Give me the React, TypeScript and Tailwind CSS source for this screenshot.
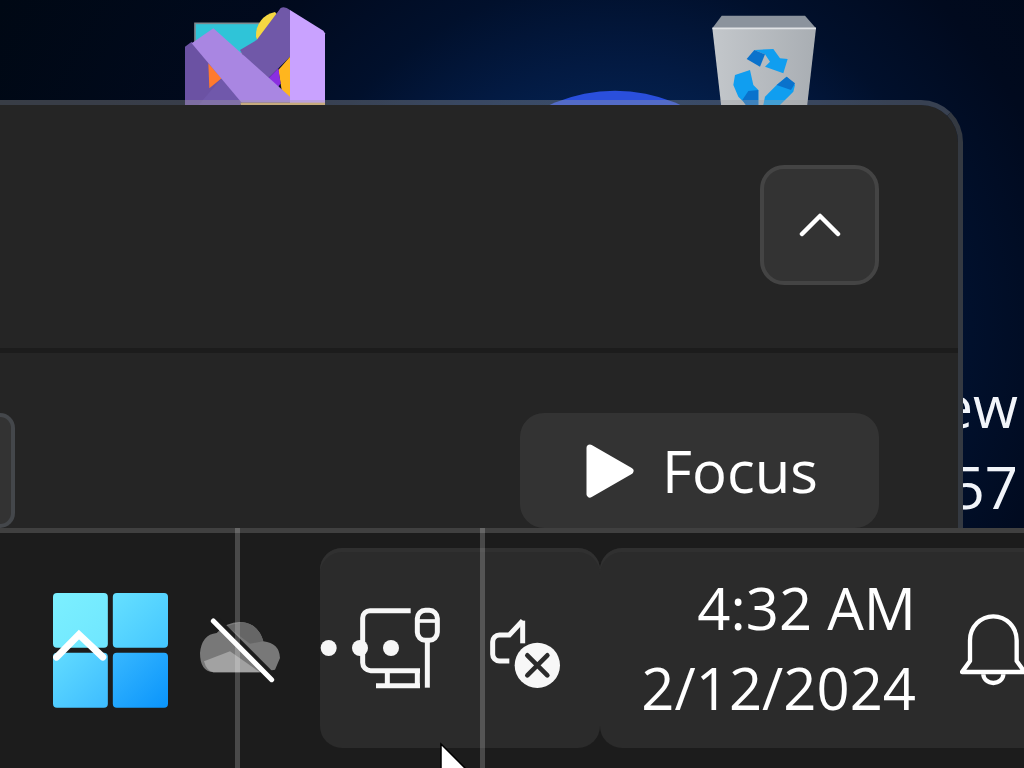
import React from "react";

const font = "font-['Open_Sans',sans-serif]";

// things sitting on the desktop, mostly hidden by the flyout
function VisualStudioIcon() {
  return (
    <svg className="absolute left-[150px] top-0 w-[340px] h-[130px]" viewBox="0 0 1020 390">
      <rect x="135" y="70" width="200" height="90" fill="#2fc4d8" stroke="#7d8a90" strokeWidth="5" />
      <path d="M318 110 A70 70 0 0 1 375 36 L395 60 L330 140 Z" fill="#f5d742" />
      <path d="M105 140 L125 125 L275 305 L270 316 L105 316 Z" fill="#6b52a3" />
      <path d="M175 190 L215 235 L178 265 Z" fill="#ff7a2e" />
      <path d="M145 316 L215 235 L275 305 L270 316 Z" fill="#7058ab" />
      <path d="M270 150 L320 120 L392 24 Q405 18 420 30 L420 170 L355 235 L300 200 Z" fill="#7058a8" />
      <path d="M385 210 L420 170 L420 295 L395 270 Z" fill="#ffb61e" />
      <path d="M355 235 L385 205 L392 250 L382 265 Z" fill="#8a2fe0" />
      <path d="M125 130 L190 85 L420 290 L420 308 L275 308 Z" fill="#a986e2" />
      <path d="M420 30 L520 92 L525 100 L525 316 L420 316 Z" fill="#c9a2ff" />
      <rect x="272" y="308" width="253" height="8" fill="#dcb169" />
    </svg>
  );
}

function DesktopIcons() {
  return (
    <svg className="absolute left-[500px] top-0 w-[524px] h-[300px]" viewBox="0 0 1572 900">
      <defs>
        <linearGradient id="bin" x1="0" y1="0" x2="1" y2="0">
          <stop offset="0" stopColor="#c3c7cb" />
          <stop offset="1" stopColor="#a9aeb3" />
        </linearGradient>
      </defs>
      <circle cx="345" cy="743" r="471" fill="#2a4fdc" />
      <path d="M665 47 H915 L948 85 H637 Z" fill="#8b939d" />
      <path d="M637 85 H948 L920 330 H665 Z" fill="url(#bin)" />
      <path d="M637 85 H948" stroke="#dfe2e5" strokeWidth="5" />
      <g transform="translate(645 105)">
        <path d="M118 45 L175 42 L195 70 L218 72 L205 115 L150 95 L165 80 L150 58 Z" fill="#109ef0" />
        <path d="M95 72 L118 45 L150 58 L135 95 Z" fill="#0a72cc" />
        <path d="M60 120 L105 105 L115 150 L130 165 L130 210 L95 210 L70 185 L55 150 Z" fill="#109ef0" />
        <path d="M100 168 L130 165 L130 210 L92 210 L82 195 Z" fill="#0a72cc" />
        <path d="M185 150 L215 125 L240 150 L235 170 L195 210 L145 210 L150 185 Z" fill="#109ef0" />
        <path d="M185 150 L215 125 L240 145 L228 165 Z" fill="#0a72cc" />
      </g>
    </svg>
  );
}

function StartLogo() {
  return (
    <svg className="w-[115px] h-[115px] shrink-0" viewBox="160 220 346 346">
      <defs>
        <linearGradient id="w1" x1="0" y1="0" x2="1" y2="1">
          <stop offset="0" stopColor="#7cf0ff" />
          <stop offset="1" stopColor="#6fe6ff" />
        </linearGradient>
        <linearGradient id="w2" x1="0" y1="0" x2="1" y2="1">
          <stop offset="0" stopColor="#66e0ff" />
          <stop offset="1" stopColor="#44c6ff" />
        </linearGradient>
        <linearGradient id="w3" x1="0" y1="0" x2="1" y2="1">
          <stop offset="0" stopColor="#62dcff" />
          <stop offset="1" stopColor="#3dbcff" />
        </linearGradient>
        <linearGradient id="w4" x1="0" y1="0" x2="1" y2="1">
          <stop offset="0" stopColor="#38b8ff" />
          <stop offset="1" stopColor="#0a94fb" />
        </linearGradient>
      </defs>
      <rect x="160" y="220" width="165" height="165" rx="12" fill="url(#w1)" />
      <rect x="340" y="220" width="166" height="165" rx="12" fill="url(#w2)" />
      <rect x="160" y="400" width="165" height="165" rx="12" fill="url(#w3)" />
      <rect x="340" y="400" width="166" height="165" rx="12" fill="url(#w4)" />
      <path d="M171 413 L238 345 L310 413" fill="none" stroke="#fff" strokeWidth="21" strokeLinecap="round" strokeLinejoin="miter" />
    </svg>
  );
}

function OneDriveOff() {
  return (
    <svg className="w-[80px] h-[64px] shrink-0 overflow-visible" viewBox="600 295 240 192">
      <path d="M640 458 Q600 455 600 400 Q605 345 650 340 Q680 305 725 307 Q775 312 790 365 Q838 370 840 415 L825 450 L780 458 Z" fill="#787878" />
      <path d="M612 425 L690 395 L780 458 H640 Q620 455 612 425 Z" fill="#a2a2a2" />
      <path d="M680 320 L725 307 Q775 312 790 365 L750 372 Z" fill="#666" />
      <path d="M650 300 L825 475" stroke="#1c1c1c" strokeWidth="18" />
      <path d="M640 304 L815 480" stroke="#fff" strokeWidth="15" strokeLinecap="round" />
    </svg>
  );
}

function TrayIcons() {
  return (
    <svg className="w-[280px] h-[200px]" viewBox="60 84 840 600">
      <g fill="none" stroke="#f7f7f7" strokeWidth="15" strokeLinecap="butt">
        <path d="M332 272 H210 A22 22 0 0 0 188 294 V428 A24 24 0 0 0 212 452 H360" />
        <path d="M262 452 V495 M352 452 V495 M228 497 H360" />
        <rect x="352" y="271" width="60" height="90" rx="24" />
        <path d="M352 303 H412" strokeWidth="11" />
        <path d="M382 361 V503" />
        <path d="M668 302 L628 345 H598 A20 20 0 0 0 578 365 V403 A20 20 0 0 0 598 423 H628" />
        <path d="M668 302 V370" />
      </g>
      <circle cx="86" cy="384" r="24" fill="#f7f7f7" />
      <circle cx="180" cy="384" r="24" fill="#f7f7f7" />
      <circle cx="273" cy="384" r="24" fill="#f7f7f7" />
      <circle cx="712" cy="436" r="68" fill="#f7f7f7" />
      <path d="M682 406 L742 466 M742 406 L682 466" stroke="#2b2b2b" strokeWidth="14" strokeLinecap="round" />
    </svg>
  );
}

export default function App() {
  return (
    <div className={`relative w-[1024px] h-[768px] overflow-hidden bg-[#1c1c1c] ${font}`}>
      <div className="relative flex h-[528px] bg-[radial-gradient(circle_at_620px_330px,#0a3570_0%,#052a60_20%,#031a42_38%,#01102c_50%,#010a1e_65%,#000814_100%)]">
        <VisualStudioIcon />
        <DesktopIcons />

        {/* flyout */}
        <div className="relative mt-[100px] w-[963px] h-[428px] shrink-0 flex flex-col rounded-tr-[42px] border-t-[5px] border-r-[5px] border-t-[#a0a0a0]/35 border-r-[#343941] bg-[#252525] bg-clip-padding">
          <div className="flex justify-end h-[243px] pt-[60px] pr-[79px]">
            <button className="flex items-center justify-center w-[119px] h-[120px] rounded-[24px] border-[4px] border-[#444444] bg-[#333333]">
              <svg className="w-[42px] h-[24px]" viewBox="0 0 42 24">
                <path d="M3 21 L21 3 L39 21" fill="none" stroke="#fff" strokeWidth="4.5" strokeLinecap="round" strokeLinejoin="round" />
              </svg>
            </button>
          </div>
          <div className="h-[5px] bg-[#1c1c1c]" />
          <div className="flex flex-1 justify-between pt-[60px] pr-[79px]">
            <div className="w-[15px] h-[115px] rounded-r-[22px] border-y-[4px] border-r-[4px] border-[#44474b] bg-[#333333]" />
            <button className="flex items-center justify-center gap-[27px] w-[359px] h-[115px] pl-[4px] rounded-[24px] bg-[#333333] text-white text-[58px]">
              <svg className="w-[50px] h-[56px]" viewBox="0 0 50 56">
                <path d="M5 5 L45 28 L5 51 Z" fill="#fff" stroke="#fff" strokeWidth="7" strokeLinejoin="round" />
              </svg>
              <span className="leading-none">Focus</span>
            </button>
          </div>
        </div>

        {/* desktop labels cut off by the flyout */}
        <div className="flex flex-col items-end w-[61px] overflow-hidden pt-[365px] pr-[6px] text-[58px] leading-[81px] text-[#f2f5fa] whitespace-nowrap">
          <span>ew</span>
          <span>57</span>
        </div>
      </div>

      {/* taskbar */}
      <div className="flex items-start h-[240px] border-t-[5px] border-[#404040] bg-[#1c1c1c] pt-[15px]">
        <div className="flex items-center h-[200px] pt-[4px] ml-[53px] gap-[32px] shrink-0">
          <StartLogo />
          <OneDriveOff />
        </div>
        <div className="ml-[40px] w-[280px] h-[200px] shrink-0 rounded-[22px] bg-[#2b2b2b] shadow-[inset_0_4px_0_#303030]">
          <TrayIcons />
        </div>
        <div className="flex items-center w-[460px] h-[200px] shrink-0 rounded-[22px] bg-[#2b2b2b] shadow-[inset_0_4px_0_#303030] text-white text-[58px] leading-[80px]">
          <div className="w-[316px] text-right whitespace-nowrap">
            <p>4:32 AM</p>
            <p>2/12/2024</p>
          </div>
          <svg className="ml-[44px] w-[70px] h-[75px] shrink-0" viewBox="1080 270 210 225">
            <path
              d="M1110 420 V358 A70 72 0 0 1 1250 358 V420 L1274 453 H1086 Z"
              fill="none"
              stroke="#fff"
              strokeWidth="13"
              strokeLinejoin="round"
            />
            <path d="M1150 460 A30 26 0 0 0 1210 460" fill="none" stroke="#fff" strokeWidth="13" />
          </svg>
        </div>
      </div>

      {/* capture artefacts lying over the taskbar */}
      <div className="absolute left-[235px] top-[528px] w-[5px] h-[240px] bg-white/20" />
      <div className="absolute left-[480px] top-[528px] w-[5px] h-[240px] bg-white/20" />
      <svg className="absolute left-[436px] top-[740px] w-[40px] h-[28px]" viewBox="0 0 40 28">
        <path d="M5 4 L34 33 H5 Z" fill="#fff" stroke="#000" strokeWidth="1.5" />
      </svg>
    </div>
  );
}
